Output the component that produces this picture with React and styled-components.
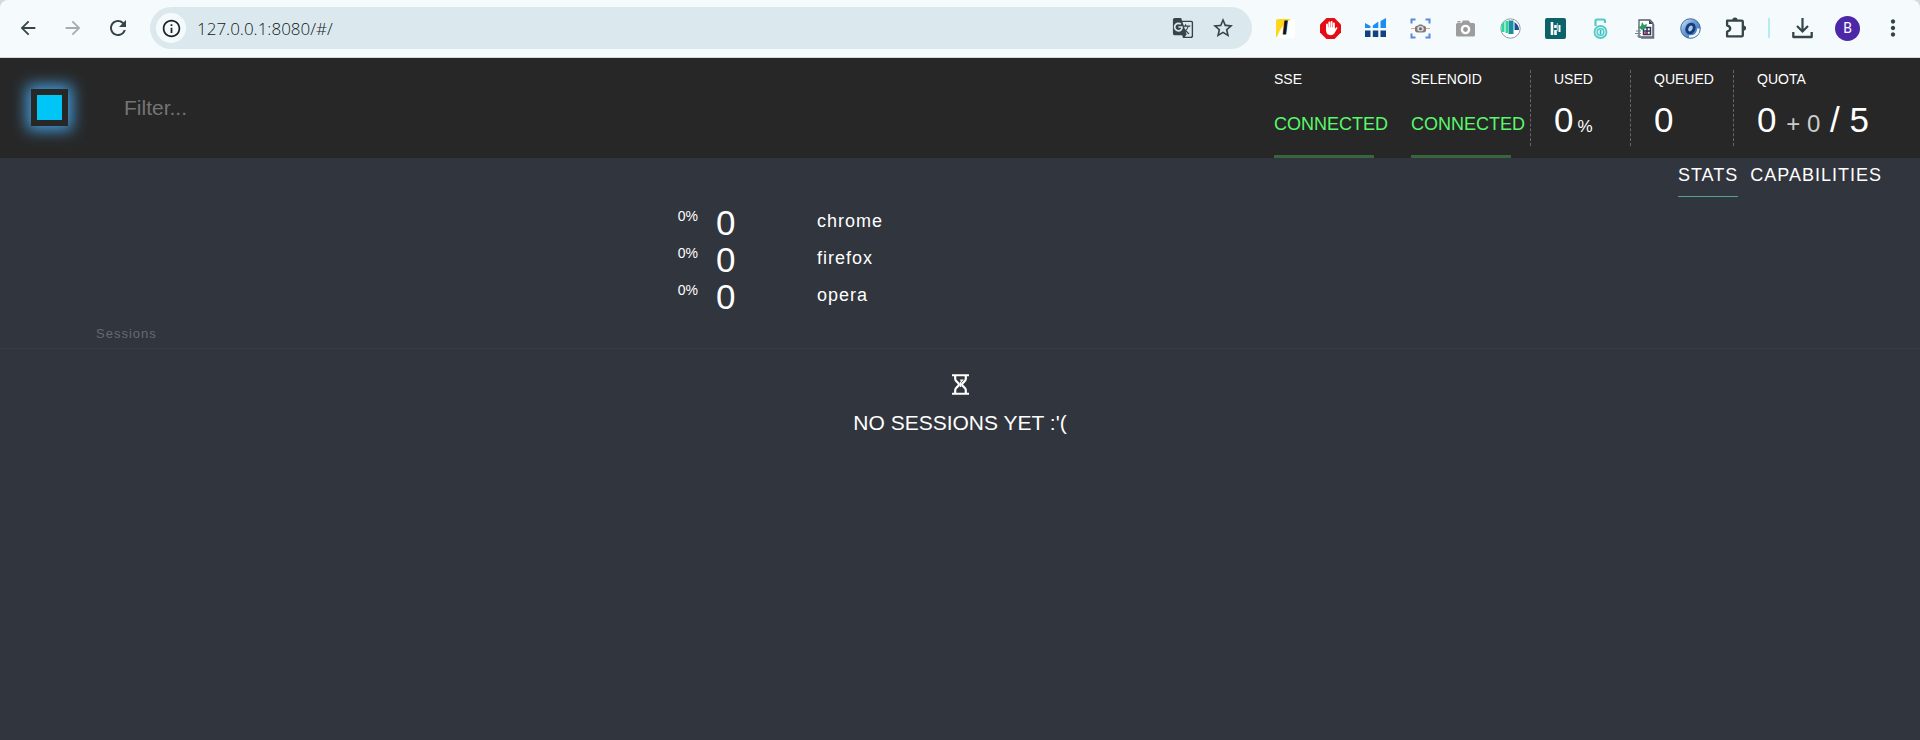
import React from "react";
import styled, { createGlobalStyle } from "styled-components";
import {
  MdArrowBack,
  MdArrowForward,
  MdRefresh,
  MdInfoOutline,
  MdStarBorder,
  MdGTranslate,
  MdMoreVert,
} from "react-icons/md";

const GlobalStyle = createGlobalStyle`
  * { box-sizing: border-box; }
  body {
    margin: 0;
    background: #31353d;
    color: #fff;
    font-family: "Liberation Sans", Arial, sans-serif;
  }
  button, input { font: inherit; color: inherit; border: 0; padding: 0; background: none; outline: none; }
  svg { display: block; }
`;

/* ---------- browser bar ---------- */

const BarBackdrop = styled.div`
  background: #d3dadd;
`;

const BrowserBar = styled.div`
  display: flex;
  align-items: center;
  height: 58px;
  padding: 0 5px 1px;
  background: #f5fbfd;
  border-bottom: 1px solid #d5d9db;
  border-radius: 8px 8px 0 0;
  color: #36454a;
`;

const BarButton = styled.button`
  display: flex;
  align-items: center;
  justify-content: center;
  flex: none;
  width: ${(p) => p.$width || 45}px;
  height: 42px;
  color: ${(p) => (p.$muted ? "#a5acae" : "inherit")};
`;

const AddressBox = styled.div`
  display: flex;
  align-items: center;
  flex: 1;
  min-width: 0;
  height: 42px;
  margin: 0 11px 0 10px;
  padding: 0 9px 0 6px;
  border-radius: 21px;
  background: #dbe9ee;
`;

const SiteInfo = styled.button`
  display: flex;
  align-items: center;
  justify-content: center;
  width: 30px;
  height: 30px;
  border-radius: 50%;
  background: #f5fbfd;
  color: #1b2427;
`;

const Address = styled.input`
  flex: 1;
  min-width: 0;
  margin-left: 11px;
  font-family: "Open Sans", sans-serif;
  font-size: 17px;
  font-weight: 300;
  color: #10181b;
`;

const BarDivider = styled.span`
  width: 2px;
  height: 20px;
  margin: 0 10px;
  background: #b4ecf4;
`;

const Avatar = styled.span`
  display: flex;
  align-items: center;
  justify-content: center;
  width: 25px;
  height: 25px;
  border-radius: 50%;
  background: #4c28a8;
  color: #fff;
  font-family: Roboto, sans-serif;
  font-size: 14px;
`;

/* ---------- application header ---------- */

const Header = styled.header`
  display: flex;
  height: 100px;
  padding: 0 27px 0 31px;
  background: #272727;
`;

const Logo = styled.a`
  flex: none;
  width: 37px;
  height: 37px;
  margin-top: 31px;
  border: 6px solid #272727;
  background: #00c6f7;
  box-shadow: 0 0 15px 4px #459fe0;
`;

const FilterField = styled.label`
  display: flex;
  flex: 1;
  min-width: 0;
  margin-left: 56px;
`;

const FilterInput = styled.input`
  width: 100%;
  font-size: 21px;
  &::placeholder { color: #757575; opacity: 1; }
`;

const StatusGroup = styled.div`
  display: flex;
  gap: 37px;
  margin-right: 19px;
`;

const Status = styled.div`
  display: flex;
  flex-direction: column;
  gap: 26px;
  width: 100px;
  padding-top: 12px;
  border-bottom: 3px solid #38643e;
  white-space: nowrap;
`;

const Label = styled.div`
  font-size: 14px;
  line-height: 18px;
`;

const StatusValue = styled.div`
  font-size: 18px;
  line-height: 20px;
  color: #59f86b;
`;

const Metric = styled.div`
  display: flex;
  flex-direction: column;
  gap: 12px;
  align-self: center;
  width: ${(p) => p.$width}px;
  height: 76px;
  padding-left: 23px;
  border-left: 1px dashed #666;
  white-space: nowrap;
`;

const MetricValue = styled.div`
  font-size: 35px;
  line-height: 40px;
`;

const Unit = styled.span`
  margin-left: 4px;
  font-size: 17px;
`;

const Pending = styled.span`
  font-size: 24px;
  color: #ccc;
`;

/* ---------- page content ---------- */

const Tabs = styled.nav`
  display: flex;
  justify-content: flex-end;
  gap: 12px;
  padding: 0 38px;
`;

const Tab = styled.a`
  height: 39px;
  border-bottom: 1px solid ${(p) => (p.$active ? "#59a18f" : "transparent")};
  font-size: 18px;
  line-height: 35px;
  letter-spacing: 1px;
  color: #fff;
  text-decoration: none;
`;

const BrowserList = styled.ul`
  width: 600px;
  max-width: 100%;
  margin: 7px auto 0;
  padding: 0 0 2px;
  list-style: none;
`;

const BrowserRow = styled.li`
  display: grid;
  grid-template-columns: 38px 83px 1fr;
  column-gap: 18px;
  height: 37px;
  line-height: 37px;
`;

const Share = styled.span`
  font-size: 14px;
  line-height: 25px;
  text-align: right;
`;

const Count = styled.span`
  font-size: 35px;
`;

const BrowserName = styled.span`
  font-size: 18px;
  line-height: 35px;
  letter-spacing: 1px;
`;

const SessionsTitle = styled.h2`
  margin: 0;
  padding: 8px 96px 5px;
  border-bottom: 1px solid #3a3d44;
  font-size: 13px;
  font-weight: 400;
  line-height: 18px;
  letter-spacing: 1px;
  color: #666a70;
`;

const Empty = styled.div`
  display: flex;
  flex-direction: column;
  align-items: center;
  gap: 16px;
  padding-top: 25px;
  font-size: 21px;
  line-height: 24px;
`;

/* ---------- drawings ---------- */

const Drawing = ({ size = 21, children }) => (
  <svg width={size} height={size} viewBox="0 0 21 21" fill="none" aria-hidden="true">
    {children}
  </svg>
);

const LIcon = () => (
  <Drawing>
    <rect x="1" y="1" width="19" height="19" rx="3" fill="#fff" />
    <path d="M1 19V3a2 2 0 0 1 2-2h13Q6 7 2 19z" fill="#fcd71d" />
    <text x="8" y="16" fontFamily="Lato, sans-serif" fontWeight="900" fontStyle="italic" fontSize="17" fill="#111" stroke="#111">l</text>
  </Drawing>
);

const BlockIcon = () => (
  <Drawing>
    <path d="M6.500 0h8L21 6.500v8L14.500 21h-8L0 14.500v-8z" fill="#e40d13" />
    <path d="M7 12V6.500M9.300 10V4.500M11.600 10V4M13.900 10V5.500" stroke="#fff" strokeWidth="1.900" strokeLinecap="round" />
    <path d="M6 9.500h8.800v1.500l1.500-1.700c.8-.5 1.400.2 1 .9l-3 5.300q-1 1.700-3.500 1.700Q6 17.200 6 12z" fill="#fff" />
  </Drawing>
);

const BarsIcon = () => (
  <Drawing>
    <path d="M0 5l5.500 3v2H0zM7.800 7.500l5.500-4v6.500H7.800zM15.500 3L21 0v10h-5.500z" fill="#1c8df3" />
    <path d="M0 12.500h5.500V19H0zM7.800 12.500h5.500V19H7.800zM15.500 12.500H21V19h-5.500z" fill="#12427f" />
  </Drawing>
);

const CaptureIcon = () => (
  <Drawing>
    <path d="M1.500 5.500V1.500h4M15.500 1.500h4v4M19.500 15.500v4h-4M5.500 19.500h-4v-4" stroke="#5b86e0" strokeWidth="2" />
    <path d="M1 10.500h19" stroke="#e9a48d" />
    <path d="M5 9q1-1.500 3-1.500L9 6.500h3l1 1q2 0 3 1.500v4q-1 1.500-3 1.500H8q-2 0-3-1.500z" fill="#817a78" />
    <ellipse cx="10.500" cy="10.700" rx="3.200" ry="2.600" fill="#ddd" />
    <circle cx="10.500" cy="10.700" r="1.500" fill="#666" />
  </Drawing>
);

const CameraIcon = () => (
  <Drawing>
    <path d="M1 6.500Q1 5 2.500 5h4l1.500-2.500h5.500L15.500 5h3Q20 5 20 6.500v10.500q0 1.500-1.500 1.500h-16Q1 18.500 1 17zM2.500 3h3v1.500h-3z" fill="#9d9d9d" />
    <circle cx="10.500" cy="11.500" r="3.600" fill="#999" stroke="#fff" strokeWidth="2.400" />
  </Drawing>
);

const StripesIcon = () => (
  <Drawing>
    <circle cx="10.500" cy="10.500" r="9.700" fill="#fff" stroke="#8c9fa5" strokeWidth="1" />
    <path d="M1.500 6.500l3-3.500V14H1.500zM5.500 3h2.500v12H5.500z" fill="#2ed59a" />
    <path d="M8.500 2.500h5V16h-5z" fill="#16919c" />
    <path d="M14.500 4q4.500 3 4.500 8h-4.500z" fill="#1d4e9d" />
  </Drawing>
);

const TealIcon = () => (
  <Drawing>
    <rect width="21" height="21" rx="2" fill="#0c626b" />
    <path d="M7 4v13M10.500 7v3M10.500 12v5" stroke="#fff" strokeWidth="2.600" />
    <path d="M14.500 7v7" stroke="#fff" strokeWidth="2" />
    <path d="M12.300 5v8" stroke="#9ed7d6" strokeWidth="1" />
  </Drawing>
);

const LockIcon = () => (
  <Drawing>
    <path d="M5.500 8V3q0-1.500 1.500-1.500h6.500Q15 1.500 15 3v2" stroke="#52cbc8" strokeWidth="2.200" />
    <circle cx="10.500" cy="14" r="6" fill="#e3f6f6" stroke="#52cbc8" strokeWidth="1.800" />
    <circle cx="10.500" cy="14" r="3.300" stroke="#52cbc8" strokeWidth="1.500" />
    <path d="M10.500 12v4.500" stroke="#2fb6b8" strokeWidth="1.500" />
  </Drawing>
);

const SheetIcon = () => (
  <Drawing>
    <path d="M4 2h11l3 3v14H4z" fill="#fff" stroke="#555b68" strokeWidth="1.300" />
    <path d="M18.500 6v14H6" stroke="#666e83" strokeWidth="1.500" />
    <path d="M14 2l4 4h-4z" fill="#3b3f48" />
    <path d="M8.500 9.500h7v7h-7zM12 9.500v7M8.500 13h7" stroke="#34355a" strokeWidth="1.500" />
    <path d="M9.500 14h2v2h-2z" fill="#c43a5d" />
    <path d="M7 4l2 3 3-1-1 4-4 2-4-3 3-1z" fill="#269b60" />
    <path d="M1 13h5M0 15.500h6M2 18h4" stroke="#77818a" />
  </Drawing>
);

const OrbIcon = () => (
  <Drawing>
    <defs>
      <linearGradient id="orb" x1="0" y1="0" x2="1" y2="1">
        <stop offset="0" stopColor="#e3f0fb" />
        <stop offset=".4" stopColor="#6da1da" />
        <stop offset="1" stopColor="#2e62ab" />
      </linearGradient>
    </defs>
    <circle cx="10.500" cy="10.500" r="9.800" fill="url(#orb)" stroke="#46699b" />
    <path d="M9 18.500q9 .5 9.500-8" stroke="#eef6fc" strokeWidth="2.500" />
    <ellipse cx="10.500" cy="10.500" rx="3.500" ry="4.500" fill="#a8ccec" stroke="#173c78" strokeWidth="3" transform="rotate(25 10.500 10.500)" />
  </Drawing>
);

const PuzzleIcon = () => (
  <Drawing size={22}>
    <path d="M2 3.500h14q1 0 1 1v13q0 1-1 1H2v-4.500q3-1 3-3t-3-3z" stroke="currentColor" strokeWidth="2.200" strokeLinejoin="round" />
    <path d="M7 3a2.500 2.500 0 0 1 5 0zM17.500 8a2.600 2.600 0 0 1 0 5.200z" fill="currentColor" />
  </Drawing>
);

const DownloadIcon = () => (
  <Drawing>
    <path d="M10.500 0v13M5 8l5.500 5.500L16 8" stroke="currentColor" strokeWidth="2.200" />
    <path d="M1.300 14v5h18.400v-5" stroke="currentColor" strokeWidth="2.300" strokeLinejoin="round" />
  </Drawing>
);

const Hourglass = () => (
  <svg width="17" height="21" viewBox="0 0 17 21" fill="none" stroke="#fff" aria-hidden="true">
    <path d="M0 1.200h17M0 19.700h17" strokeWidth="2" />
    <path d="M3.200 2v3c0 2.500 3.800 3.500 3.800 5.500S3.200 13.500 3.200 16V19M13.800 2v3c0 2.500-3.800 3.500-3.800 5.500s3.800 3 3.800 5.500V19" strokeWidth="2.200" />
    <path d="M8 5.500h4L9 8.500z" fill="#fff" stroke="none" />
    <path d="M8.500 8v5" strokeWidth="1.500" />
  </svg>
);

const extensions = [
  ["Reader", LIcon],
  ["Ad blocker", BlockIcon],
  ["Traffic", BarsIcon],
  ["Area capture", CaptureIcon],
  ["Screenshot", CameraIcon],
  ["Stripes", StripesIcon],
  ["Notes", TealIcon],
  ["Unlock", LockIcon],
  ["Table export", SheetIcon],
  ["Orb", OrbIcon],
  ["Extensions", PuzzleIcon],
];

const browsers = [
  { name: "chrome", share: 0, count: 0 },
  { name: "firefox", share: 0, count: 0 },
  { name: "opera", share: 0, count: 0 },
];

export default function App() {
  return (
    <>
      <GlobalStyle />
      <BarBackdrop>
        <BrowserBar>
          <BarButton aria-label="Back"><MdArrowBack size={22} /></BarButton>
          <BarButton aria-label="Forward" $muted><MdArrowForward size={22} /></BarButton>
          <BarButton aria-label="Reload"><MdRefresh size={24} /></BarButton>
          <AddressBox>
            <SiteInfo aria-label="Site information"><MdInfoOutline size={21} /></SiteInfo>
            <Address aria-label="Address" defaultValue="127.0.0.1:8080/#/" />
            <BarButton aria-label="Translate" $width={40}><MdGTranslate size={22} /></BarButton>
            <BarButton aria-label="Bookmark" $width={40}><MdStarBorder size={24} /></BarButton>
          </AddressBox>
          {extensions.map(([name, Icon]) => (
            <BarButton key={name} aria-label={name}><Icon /></BarButton>
          ))}
          <BarDivider />
          <BarButton aria-label="Downloads"><DownloadIcon /></BarButton>
          <BarButton aria-label="Profile"><Avatar>B</Avatar></BarButton>
          <BarButton aria-label="Menu"><MdMoreVert size={26} /></BarButton>
        </BrowserBar>
      </BarBackdrop>

      <Header>
        <Logo href="#/" aria-label="Home" />
        <FilterField>
          <FilterInput placeholder="Filter..." aria-label="Filter" />
        </FilterField>
        <StatusGroup>
          <Status>
            <Label>SSE</Label>
            <StatusValue>CONNECTED</StatusValue>
          </Status>
          <Status>
            <Label>SELENOID</Label>
            <StatusValue>CONNECTED</StatusValue>
          </Status>
        </StatusGroup>
        <Metric $width={100}>
          <Label>USED</Label>
          <MetricValue>0<Unit>%</Unit></MetricValue>
        </Metric>
        <Metric $width={103}>
          <Label>QUEUED</Label>
          <MetricValue>0</MetricValue>
        </Metric>
        <Metric $width={160}>
          <Label>QUOTA</Label>
          <MetricValue>0 <Pending>+ 0</Pending> / 5</MetricValue>
        </Metric>
      </Header>

      <main>
        <Tabs>
          <Tab href="#/" $active>STATS</Tab>
          <Tab href="#/capabilities/">CAPABILITIES</Tab>
        </Tabs>
        <BrowserList>
          {browsers.map((b) => (
            <BrowserRow key={b.name}>
              <Share>{b.share}%</Share>
              <Count>{b.count}</Count>
              <BrowserName>{b.name}</BrowserName>
            </BrowserRow>
          ))}
        </BrowserList>
        <SessionsTitle>Sessions</SessionsTitle>
        <Empty>
          <Hourglass />
          <div>NO SESSIONS YET :'(</div>
        </Empty>
      </main>
    </>
  );
}
